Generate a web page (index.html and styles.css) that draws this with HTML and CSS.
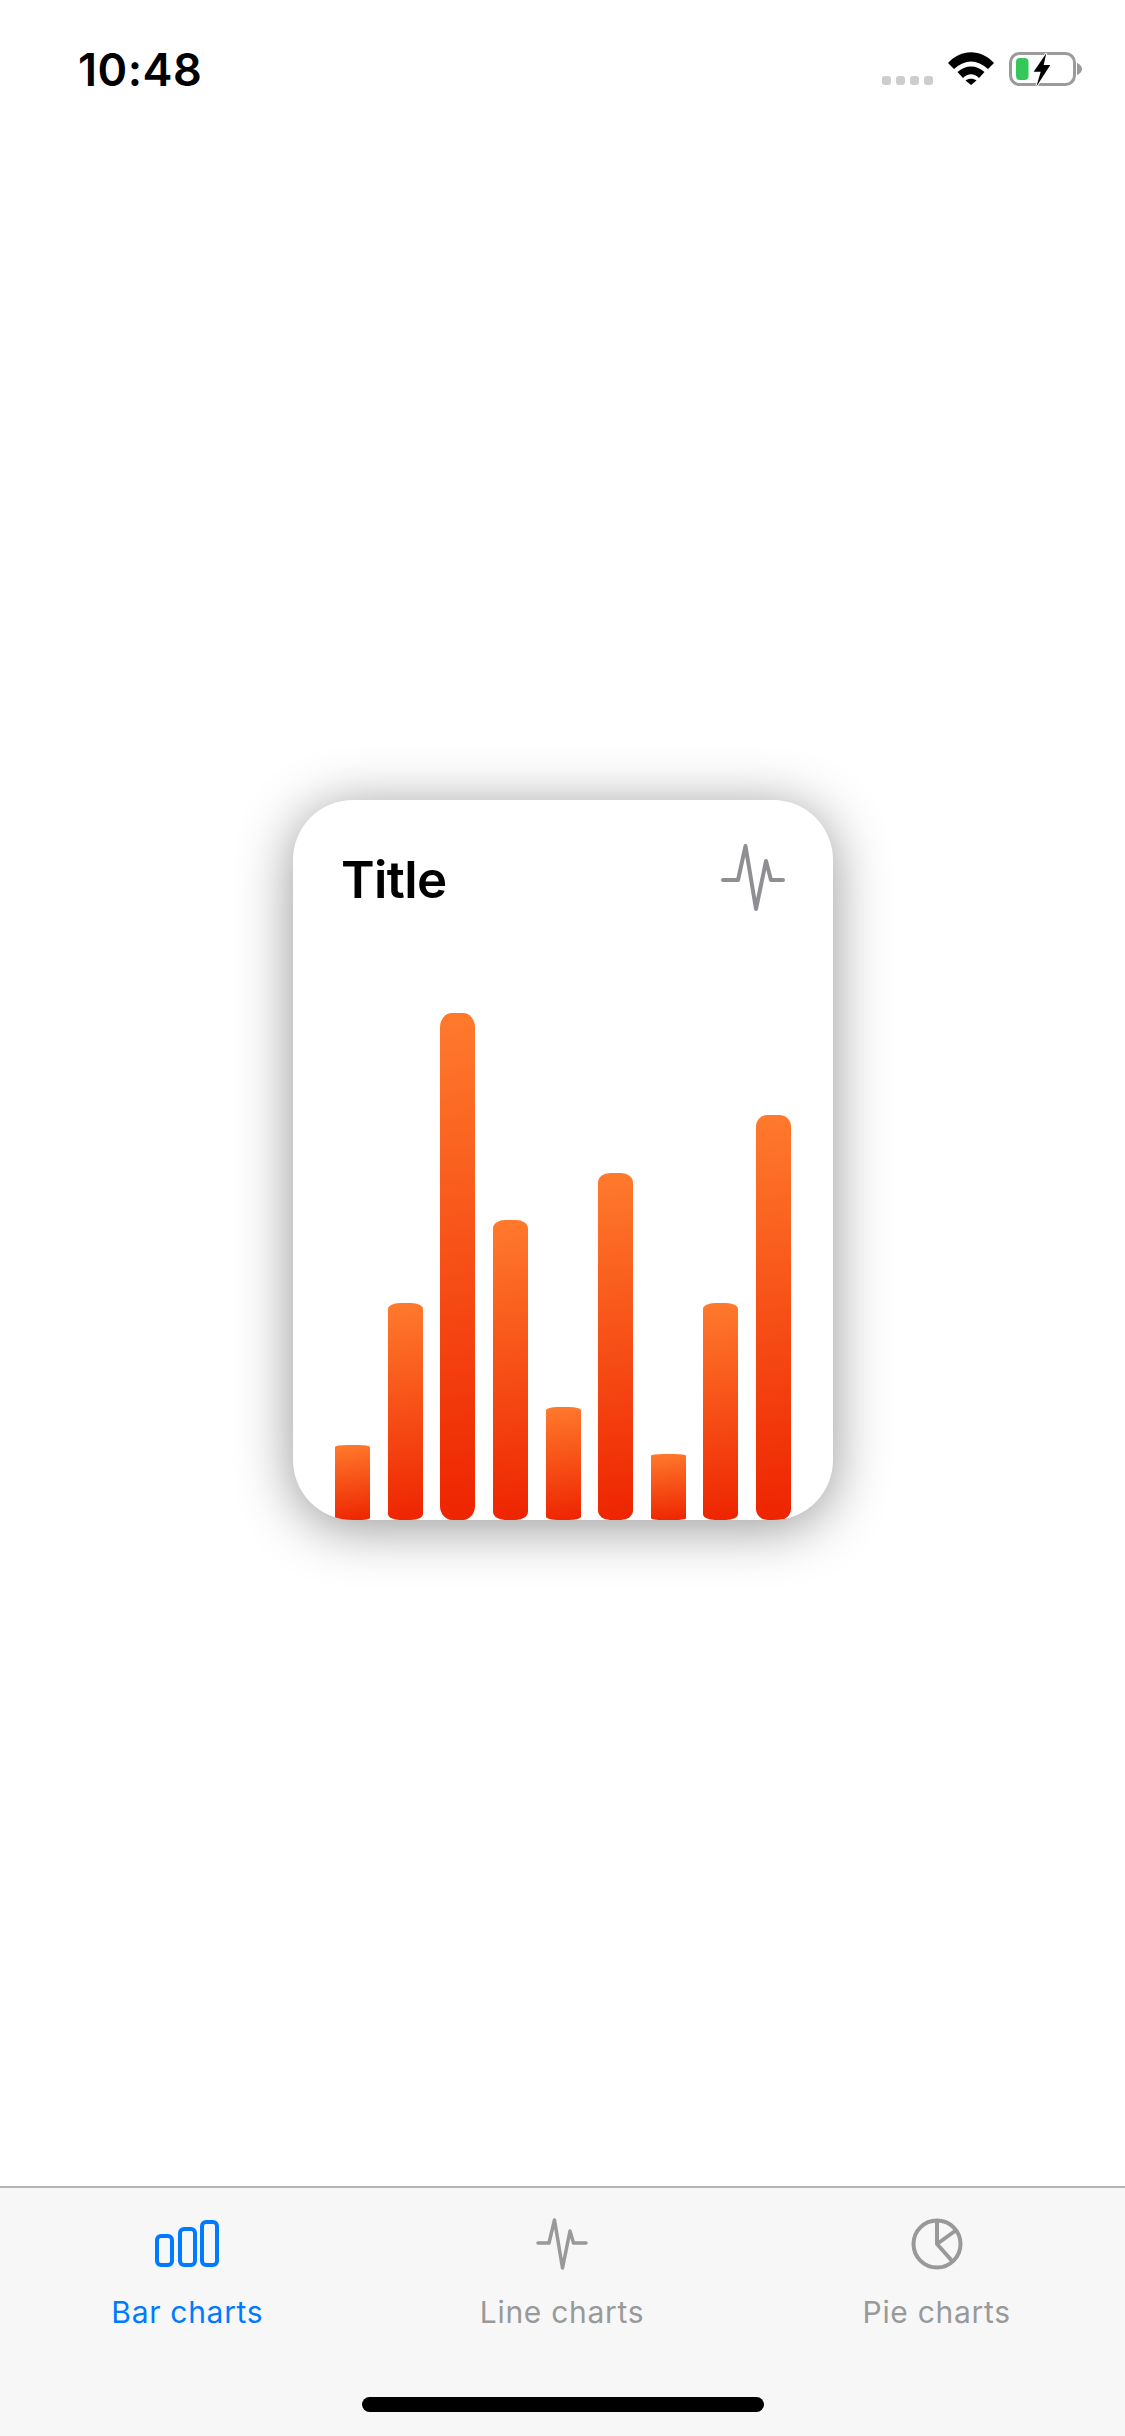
FILE: index.html
```html
<!DOCTYPE html>
<html lang="en">
<head>
    <meta charset="UTF-8">
    <meta name="viewport" content="width=device-width, initial-scale=1.0">
    <title>Bar charts</title>
    <link rel="stylesheet" href="styles.css">
</head>
<body>

<div class="screen">
    <!-- Status bar -->
    <div class="status-bar">
        <span class="time">10:48</span>
        <div class="status-icons">
            <div class="signal">
                <span></span><span></span><span></span><span></span>
            </div>
            <svg class="wifi" width="46" height="33" viewBox="0 0 46 33">
                <path d="M0 11 C13 -3.500 33 -3.500 46 11 L40 17 C29 7 17 7 6 17 Z" fill="#000"/>
                <path d="M9.500 20 C17 12.500 29 12.500 36.500 20 L31 26 C26 21 20 21 15 26 Z" fill="#000"/>
                <path d="M17.500 28.500 C20.500 26 25.500 26 28.500 28.500 L23 33 Z" fill="#000"/>
            </svg>
            <svg class="battery" width="73" height="36" viewBox="0 0 73 36">
                <rect x="1.500" y="1.500" width="64" height="31" rx="9" fill="none" stroke="#9b9b9b" stroke-width="3"/>
                <path d="M68 11 C71 12 73 14.500 73 17 C73 19.500 71 22 68 23 Z" fill="#9b9b9b"/>
                <rect x="7" y="6" width="12.500" height="22" rx="4" fill="#34c759"/>
                <path d="M37.300 1.300 L24.700 19.700 L31.700 19.700 L27.300 34.700 L41.300 13 L34.700 13 Z" fill="#000" stroke="#fff" stroke-width="2" paint-order="stroke"/>
            </svg>
        </div>
    </div>

    <!-- Chart card -->
    <div class="main">
        <div class="card">
            <div class="card-header">
                <span class="card-title">Title</span>
                <svg class="card-icon" width="66" height="70" viewBox="0 0 66 70">
                    <path d="M3 37 L18 37 L25.500 3 L36 66 L46 18 L51 37 L63 37" fill="none" stroke="#8e8e93" stroke-width="4" stroke-linecap="round" stroke-linejoin="round"/>
                </svg>
            </div>
            <div class="bars">
                <div class="bar" style="height: 75px"></div>
                <div class="bar" style="height: 217px"></div>
                <div class="bar" style="height: 507px"></div>
                <div class="bar" style="height: 300px"></div>
                <div class="bar" style="height: 113px"></div>
                <div class="bar" style="height: 347px"></div>
                <div class="bar" style="height: 66px"></div>
                <div class="bar" style="height: 217px"></div>
                <div class="bar" style="height: 405px"></div>
            </div>
        </div>
    </div>

    <!-- Tab bar -->
    <div class="tab-bar">
        <div class="tabs">
            <div class="tab tab-active">
                <svg class="tab-icon" width="64" height="52" viewBox="0 0 64 52">
                    <rect x="2" y="18" width="15" height="29" rx="4" fill="none" stroke="#007aff" stroke-width="4"/>
                    <rect x="25" y="11" width="15" height="36" rx="4" fill="none" stroke="#007aff" stroke-width="4"/>
                    <rect x="47" y="4" width="15" height="43" rx="4" fill="none" stroke="#007aff" stroke-width="4"/>
                </svg>
                <span>Bar charts</span>
            </div>
            <div class="tab">
                <svg class="tab-icon" width="52" height="52" viewBox="0 0 52 52">
                    <path d="M2 25 L13 25 L18.500 2 L26.500 50 L34 13 L37.500 25 L50 25" fill="none" stroke="#999" stroke-width="3.500" stroke-linecap="round" stroke-linejoin="round"/>
                </svg>
                <span>Line charts</span>
            </div>
            <div class="tab">
                <svg class="tab-icon" width="52" height="52" viewBox="0 0 52 52">
                    <circle cx="26" cy="26" r="23.500" fill="none" stroke="#999" stroke-width="4"/>
                    <path d="M26 3 L26 26 L44 13 M26 26 L42 44" fill="none" stroke="#999" stroke-width="4" stroke-linejoin="round"/>
                </svg>
                <span>Pie charts</span>
            </div>
        </div>
        <div class="home-indicator"></div>
    </div>
</div>

</body>
</html>
```

FILE: styles.css
```css
html, body {
    margin: 0;
    padding: 0;
}
body {
    font-family: Inter, "Liberation Sans", sans-serif;
    background-color: #ffffff;
}
.screen {
    width: 1125px;
    height: 2436px;
    display: flex;
    flex-direction: column;
    overflow: hidden;
}

/* status bar */
.status-bar {
    height: 134px;
    flex: none;
    display: flex;
    justify-content: space-between;
    align-items: flex-start;
    padding: 44px 43px 0 78px;
    box-sizing: border-box;
}
.time {
    margin-top: 2px;
    font-size: 45px;
    font-weight: 600;
    line-height: 48px;
    letter-spacing: 0.5px;
    color: #000;
}
.status-icons {
    display: flex;
    align-items: flex-start;
    gap: 15px;
    margin-top: 8px;
}
.signal {
    display: flex;
    gap: 5px;
    margin-top: 24px;
}
.signal span {
    width: 9px;
    height: 9px;
    border-radius: 3px;
    background-color: #cdcdcd;
}

/* card */
.main {
    flex: 1;
    display: flex;
    align-items: center;
    justify-content: center;
    padding-left: 1px;
}
.card {
    width: 540px;
    height: 720px;
    display: flex;
    flex-direction: column;
    background: #ffffff;
    border-radius: 60px;
    box-shadow: 0 7px 55px rgba(0, 0, 0, 0.42);
    overflow: hidden;
}
.card-header {
    display: flex;
    justify-content: space-between;
    align-items: flex-start;
    padding: 43px 47px 0 48px;
}
.card-title {
    margin-top: 6px;
    font-size: 51px;
    font-weight: 600;
    line-height: 62px;
    letter-spacing: -0.6px;
    color: #000;
}
.bars {
    flex: 1;
    display: flex;
    align-items: flex-end;
    justify-content: space-between;
    padding: 0 42px;
}
.bar {
    width: 35px;
    border-radius: 34% / 2.800%;
    background: linear-gradient(172deg, #ff7a2d 0%, #ee2400 100%);
}

/* tab bar */
.tab-bar {
    height: 250px;
    flex: none;
    box-sizing: border-box;
    display: flex;
    flex-direction: column;
    align-items: center;
    background-color: #f7f7f8;
    border-top: 2px solid #b4b4b4;
}
.tabs {
    width: 100%;
    flex: 1;
    display: grid;
    grid-template-columns: repeat(3, 1fr);
    padding-right: 1px;
    box-sizing: border-box;
}
.tab {
    display: flex;
    flex-direction: column;
    align-items: center;
    padding-top: 30px;
    color: #999;
    font-size: 30px;
    line-height: 36px;
    letter-spacing: 0.7px;
}
.tab-active {
    color: #007aff;
}
.tab-icon {
    display: block;
    margin-bottom: 24px;
}
.home-indicator {
    width: 402px;
    height: 15px;
    margin-bottom: 24px;
    border-radius: 8px;
    background-color: #000;
}
```
